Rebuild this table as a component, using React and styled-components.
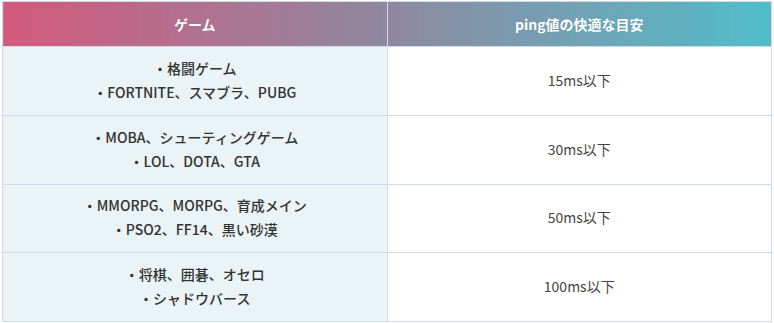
import React from "react";
import styled, { createGlobalStyle } from "styled-components";

const GlobalStyle = createGlobalStyle`
  body {
    margin: 0;
    background: #fff;
    font-family: "Noto Sans CJK JP", "Noto Sans", sans-serif;
  }
`;

const Wrap = styled.div`
  padding: 1px 2px;
`;

const Table = styled.table`
  width: 770px;
  border-collapse: collapse;
  table-layout: fixed;
  border: 1px solid #cfdbe5;
  font-size: 14px;
`;

const HeadCell = styled.th`
  height: 43px;
  padding: 0 0 1px;
  border: 1px solid #cfdbe5;
  color: #fff;
  font-weight: 700;
  font-size: 14px;
  text-shadow: 0 0 1px rgba(0, 0, 0, 0.15);
  background: linear-gradient(to right, #d3597c, #8f88a0 50%, #51bdc9);
  background-size: 200% 100%;
  background-position: ${props => (props.side === "right" ? "100% 0" : "0 0")};
`;

const Row = styled.tr`
  height: ${props => props.h}px;
`;

const GameCell = styled.td`
  padding: 0 0 3px;
  border: 1px solid #cfdbe5;
  background: #eaf4f7;
  color: #333;
  font-weight: 500;
  text-align: center;
  line-height: 24px;
`;

const PingCell = styled.td`
  padding: 0 0 3px;
  border: 1px solid #cfdbe5;
  background: #fff;
  color: #444;
  text-align: center;
`;

const rows = [
  { games: ["・格闘ゲーム", "・FORTNITE、スマブラ、PUBG"], ping: "15ms以下", h: 69 },
  { games: ["・MOBA、シューティングゲーム", "・LOL、DOTA、GTA"], ping: "30ms以下", h: 69 },
  { games: ["・MMORPG、MORPG、育成メイン", "・PSO2、FF14、黒い砂漠"], ping: "50ms以下", h: 68 },
  { games: ["・将棋、囲碁、オセロ", "・シャドウバース"], ping: "100ms以下", h: 69 },
];

const App = () => (
  <Wrap>
    <GlobalStyle />
    <Table>
      <thead>
        <tr>
          <HeadCell side="left">ゲーム</HeadCell>
          <HeadCell side="right">ping値の快適な目安</HeadCell>
        </tr>
      </thead>
      <tbody>
        {rows.map(r => (
          <Row key={r.ping} h={r.h}>
            <GameCell>
              {r.games.map(g => (
                <div key={g}>{g}</div>
              ))}
            </GameCell>
            <PingCell>{r.ping}</PingCell>
          </Row>
        ))}
      </tbody>
    </Table>
  </Wrap>
);

export default App;
